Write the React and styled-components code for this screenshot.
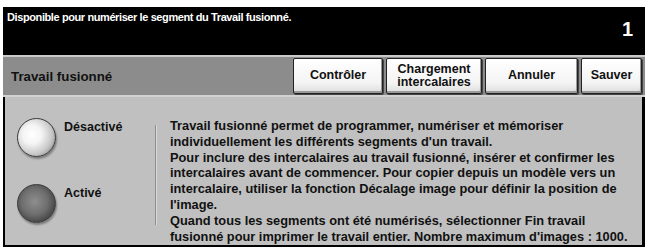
import React from "react";
import styled, { createGlobalStyle } from "styled-components";

const Global = createGlobalStyle`
  html, body { margin: 0; padding: 0; background: #ffffff; }
  body { font-family: "Liberation Sans", Arial, sans-serif; }
`;

const Frame = styled.div`
  width: 642px;
  margin: 7px 0 0 3px;
  display: flex;
  flex-direction: column;
`;

const Header = styled.div`
  height: 48px;
  background: #000;
  color: #fff;
  display: flex;
  justify-content: space-between;
  box-sizing: border-box;
  padding: 3px 12px 0 4px;
`;

const Message = styled.div`
  font-size: 11px;
  font-weight: bold;
  line-height: 14px;
  letter-spacing: -0.4px;
`;

const Counter = styled.div`
  font-size: 20px;
  font-weight: bold;
  align-self: flex-end;
  margin-bottom: 14px;
`;

const Toolbar = styled.div`
  height: 42px;
  box-sizing: border-box;
  background: #8c8c8c;
  border-top: 2px solid #c9c9c9;
  border-bottom: 2px solid #d2d2d2;
  display: flex;
  align-items: flex-start;
  padding: 1px 3px 0 8px;
`;

const Title = styled.div`
  flex: 1;
  font-size: 13.3px;
  font-weight: bold;
  color: #111;
  align-self: center;
`;

const Buttons = styled.div`
  display: flex;
  gap: 3px;
`;

const Button = styled.button`
  width: ${(p) => p.$w}px;
  height: 36px;
  box-sizing: border-box;
  background: linear-gradient(#ffffff, #f4f4f4 70%, #dcdcdc);
  border: 1px solid #222;
  border-radius: 2px;
  box-shadow: inset -1px -2px 0 #9a9a9a, 1px 1px 0 #444;
  font-family: "Liberation Sans", Arial, sans-serif;
  font-size: 12.5px;
  font-weight: bold;
  line-height: 13px;
  color: #111;
  padding: 0 0 1px;
  display: flex;
  align-items: center;
  justify-content: center;
  text-align: center;
`;

const Body = styled.div`
  height: 150px;
  box-sizing: border-box;
  background: #c0c0c0;
  border-left: 2px solid #000;
  border-right: 3px solid #000;
  border-bottom: 2px solid #000;
  display: flex;
`;

const Options = styled.div`
  width: 150px;
  display: flex;
  flex-direction: column;
  padding: 21px 0 0 12px;
  gap: 27px;
  box-sizing: border-box;
`;

const Option = styled.div`
  display: flex;
  align-items: flex-start;
  gap: 8px;
`;

const Sphere = styled.div`
  width: 39px;
  height: 39px;
  border-radius: 50%;
  box-sizing: border-box;
  border: 1px solid #3a3a3a;
  background: ${(p) =>
    p.$on
      ? "radial-gradient(circle at 45% 45%, #8e8e8e 0%, #6e6e6e 45%, #3e3e3e 80%, #151515 100%)"
      : "radial-gradient(circle at 38% 42%, #ffffff 0%, #f4f4f4 30%, #c4c4c4 65%, #7a7a7a 88%, #3a3a3a 100%)"};
  box-shadow: 1px 2px 2px rgba(0, 0, 0, 0.35);
`;

const Label = styled.div`
  font-size: 12.5px;
  font-weight: bold;
  color: #111;
  margin-top: 2px;
`;

const Divider = styled.div`
  width: 1px;
  margin: 28px 0 20px 0;
  background: #8e8e8e;
  box-shadow: 1px 0 0 #dadada;
`;

const Text = styled.div`
  padding: 21px 0 0 14px;
  font-size: 12.8px;
  font-weight: bold;
  line-height: 15.8px;
  color: #111;
  white-space: nowrap;
`;

export default function App() {
  return (
    <>
      <Global />
      <Frame>
        <Header>
          <Message>Disponible pour numériser le segment du Travail fusionné.</Message>
          <Counter>1</Counter>
        </Header>
        <Toolbar>
          <Title>Travail fusionné</Title>
          <Buttons>
            <Button $w={90}>Contrôler</Button>
            <Button $w={96}>
              Chargement
              <br />
              intercalaires
            </Button>
            <Button $w={93}>Annuler</Button>
            <Button $w={61}>Sauver</Button>
          </Buttons>
        </Toolbar>
        <Body>
          <Options>
            <Option>
              <Sphere />
              <Label>Désactivé</Label>
            </Option>
            <Option>
              <Sphere $on />
              <Label>Activé</Label>
            </Option>
          </Options>
          <Divider />
          <Text>
            Travail fusionné permet de programmer, numériser et mémoriser
            <br />
            individuellement les différents segments d'un travail.
            <br />
            Pour inclure des intercalaires au travail fusionné, insérer et confirmer les
            <br />
            intercalaires avant de commencer. Pour copier depuis un modèle vers un
            <br />
            intercalaire, utiliser la fonction Décalage image pour définir la position de
            <br />
            l'image.
            <br />
            Quand tous les segments ont été numérisés, sélectionner Fin travail
            <br />
            fusionné pour imprimer le travail entier. Nombre maximum d'images : 1000.
          </Text>
        </Body>
      </Frame>
    </>
  );
}
